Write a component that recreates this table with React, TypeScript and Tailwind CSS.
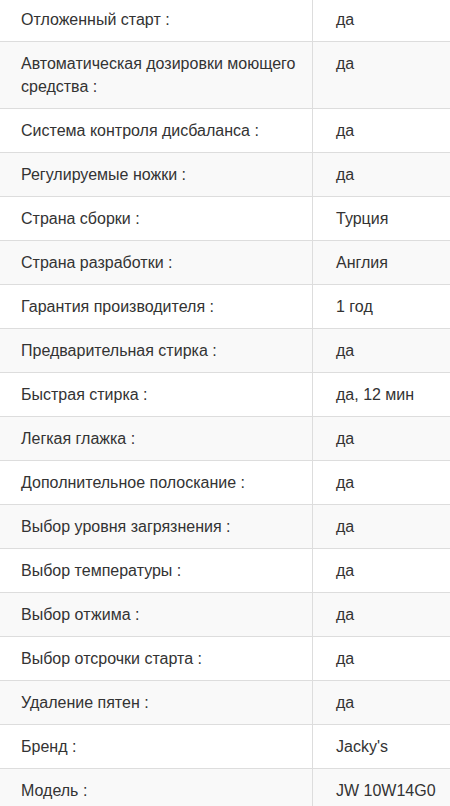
import React from "react";

const rows: [string, string][] = [
  ["Отложенный старт :", "да"],
  ["Автоматическая дозировки моющего средства :", "да"],
  ["Система контроля дисбаланса :", "да"],
  ["Регулируемые ножки :", "да"],
  ["Страна сборки :", "Турция"],
  ["Страна разработки :", "Англия"],
  ["Гарантия производителя :", "1 год"],
  ["Предварительная стирка :", "да"],
  ["Быстрая стирка :", "да, 12 мин"],
  ["Легкая глажка :", "да"],
  ["Дополнительное полоскание :", "да"],
  ["Выбор уровня загрязнения :", "да"],
  ["Выбор температуры :", "да"],
  ["Выбор отжима :", "да"],
  ["Выбор отсрочки старта :", "да"],
  ["Удаление пятен :", "да"],
  ["Бренд :", "Jacky's"],
  ["Модель :", "JW 10W14G0"],
];

export default function App() {
  return (
    <div
      className="w-[450px] h-[806px] overflow-hidden bg-white text-[#333] text-[16px] leading-[23px]"
      style={{ fontFamily: '"Liberation Sans", Arial, sans-serif' }}
    >
      {rows.map(([k, v], i) => (
        <div
          key={i}
          className={`flex ${i === 0 ? "" : "border-t border-[#dddddd]"} ${i % 2 === 1 ? "bg-[#f9f9f9]" : "bg-white"}`}
        >
          <div className={`w-[312px] shrink-0 pl-[21px] pr-[16px] ${i === 0 ? "pt-[8px]" : "pt-[10px]"} pb-[10px]`}>
            {k}
          </div>
          <div className={`flex-1 border-l border-[#dddddd] pl-[23px] pr-[8px] ${i === 0 ? "pt-[8px]" : "pt-[10px]"} pb-[10px] whitespace-nowrap`}>
            {v}
          </div>
        </div>
      ))}
    </div>
  );
}
